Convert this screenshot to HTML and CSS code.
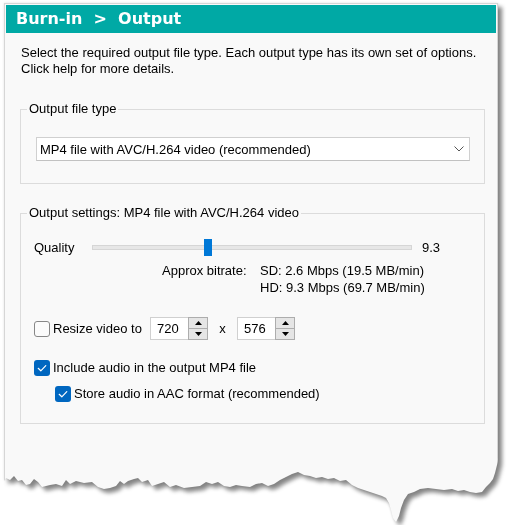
FILE: index.html
```html
<!DOCTYPE html>
<html lang="en">
<head>
<meta charset="utf-8">
<title>Burn-in &gt; Output</title>
<link rel="stylesheet" href="styles.css">
</head>
<body>
<div class="sheet">
  <div class="panel">
    <div class="title">Burn-in  &gt;  Output</div>
    <div class="content">
      <p class="intro">Select the required output file type. Each output type has its own set of options.<br>Click help for more details.</p>

      <fieldset class="group g1">
        <legend>Output file type</legend>
        <div class="group-body">
          <div class="combo">
            <span>MP4 file with AVC/H.264 video (recommended)</span>
            <svg class="chev" width="10" height="6" viewBox="0 0 10 6"><polyline points="0.5,0.5 5,5 9.5,0.5" fill="none" stroke="#555" stroke-width="1"/></svg>
          </div>
        </div>
      </fieldset>

      <fieldset class="group g2">
        <legend>Output settings: MP4 file with AVC/H.264 video</legend>
        <div class="settings">
          <div class="quality">
            <span class="q-label">Quality</span>
            <div class="track"><div class="thumb" style="left:111px"></div></div>
            <span class="q-value">9.3</span>
          </div>

          <div class="bitrate">
            <span>Approx bitrate:</span><span>SD: 2.6 Mbps (19.5 MB/min)</span>
            <span></span><span>HD: 9.3 Mbps (69.7 MB/min)</span>
          </div>

          <div class="resize">
            <span class="cb off"></span>
            <span class="resize-label">Resize video to</span>
            <div class="spin">
              <span class="spin-val">720</span>
              <div class="spin-btns">
                <span class="spin-btn"><svg width="7" height="4" viewBox="0 0 7 4"><polygon points="3.5,0 7,4 0,4" fill="#000"/></svg></span>
                <span class="spin-btn"><svg width="7" height="4" viewBox="0 0 7 4"><polygon points="0,0 7,0 3.5,4" fill="#000"/></svg></span>
              </div>
            </div>
            <span class="times">x</span>
            <div class="spin">
              <span class="spin-val">576</span>
              <div class="spin-btns">
                <span class="spin-btn"><svg width="7" height="4" viewBox="0 0 7 4"><polygon points="3.5,0 7,4 0,4" fill="#000"/></svg></span>
                <span class="spin-btn"><svg width="7" height="4" viewBox="0 0 7 4"><polygon points="0,0 7,0 3.5,4" fill="#000"/></svg></span>
              </div>
            </div>
          </div>

          <div class="check-row">
            <span class="cb on"><svg width="16" height="16" viewBox="0 0 16 16"><polyline points="4.2,8.3 6.8,10.8 11.8,5.6" fill="none" stroke="#fff" stroke-width="1.2" stroke-linecap="round" stroke-linejoin="round"/></svg></span>
            <span>Include audio in the output MP4 file</span>
          </div>
          <div class="check-row sub">
            <span class="cb on"><svg width="16" height="16" viewBox="0 0 16 16"><polyline points="4.2,8.3 6.8,10.8 11.8,5.6" fill="none" stroke="#fff" stroke-width="1.2" stroke-linecap="round" stroke-linejoin="round"/></svg></span>
            <span>Store audio in AAC format (recommended)</span>
          </div>
        </div>
      </fieldset>
    </div>
  </div>
</div>
</body>
</html>
```

FILE: styles.css
```css
html, body {
  margin: 0;
  background: #ffffff;
}

body {
  font-family: "Liberation Sans", Arial, sans-serif;
  font-size: 13px;
  color: #000;
}

.sheet {
  margin: 3px 0 0 4px;
  width: 494px;
  filter: drop-shadow(4px 4px 2px rgba(0, 0, 0, 0.45)) drop-shadow(0 0 1px rgba(0, 0, 0, 0.12));
}

.panel {
  box-sizing: border-box;
  min-height: 522px;
  border: 1px solid #d6d6d6;
  padding: 1px;
  background: #f9f9f9;
  clip-path: polygon(0 0, 494px 0, 494px 455px,
    493px 462px, 491px 470px, 489px 476px, 486px 480px, 482px 484px, 478px 489px,
    472px 490px, 466px 489px, 460px 487px, 454px 488px, 448px 486px, 440px 487px,
    432px 486px, 424px 485px, 416px 486px, 410px 489px, 404px 491px, 400px 497px,
    397px 505px, 395px 513px, 392px 519px, 389px 515px, 387px 507px, 385px 500px,
    382px 495px, 378px 493px, 372px 491px, 366px 489px, 360px 487px, 354px 485px,
    348px 482px, 342px 477px, 336px 478px, 330px 475px, 324px 476px, 318px 474px,
    312px 475px, 306px 473px, 300px 472px, 294px 469px, 288px 471px, 282px 474px,
    276px 477px, 270px 481px, 264px 483px, 258px 480px, 252px 481px, 246px 484px,
    238px 483px, 232px 482px, 226px 484px, 220px 483px, 214px 479px, 208px 481px,
    202px 479px, 196px 483px, 188px 484px, 180px 485px, 172px 482px, 166px 484px,
    160px 479px, 154px 481px, 148px 483px, 144px 477px, 138px 479px, 134px 475px,
    130px 476px, 124px 478px, 120px 481px, 116px 478px, 112px 483px, 106px 485px,
    100px 486px, 94px 484px, 88px 479px, 80px 480px, 72px 478px, 66px 481px,
    62px 477px, 58px 483px, 52px 481px, 46px 482px, 38px 484px, 34px 479px,
    30px 476px, 26px 481px, 22px 482px, 18px 477px, 14px 478px, 10px 473px,
    6px 477px, 2px 475px, 0 478px);
}

.title {
  height: 28px;
  padding-left: 10px;
  background: #00a9a5;
  color: #ffffff;
  font-family: "DejaVu Sans", Verdana, sans-serif;
  font-weight: bold;
  font-size: 16px;
  line-height: 28px;
  white-space: pre;
}

.content {
  padding: 0 11px 0 14px;
}

.intro {
  margin: 12px 0 0 1px;
  line-height: 16px;
}

.group {
  margin: 0;
  padding: 0;
  min-width: 0;
  border: 1px solid #dcdcdc;
}

.group legend {
  margin-left: 6px;
  padding: 0 2px;
  line-height: 16px;
}

.g1 {
  margin-top: 24px;
}

.g2 {
  margin-top: 21px;
}

.group-body {
  padding: 20px 14px 22px 15px;
}

.combo {
  display: flex;
  align-items: center;
  justify-content: space-between;
  box-sizing: border-box;
  height: 24px;
  padding: 0 5px 0 3px;
  border: 1px solid #d0d0d0;
  border-bottom-color: #c2c2c2;
  background: #ffffff;
}

.chev {
  display: block;
}

.settings {
  padding: 18px 0 21px 13px;
}

.quality {
  display: flex;
  align-items: center;
  height: 17px;
}

.q-label {
  flex: 0 0 58px;
}

.track {
  position: relative;
  flex: 0 0 320px;
  box-sizing: border-box;
  height: 5px;
  border: 1px solid #d6d6d6;
  background: #e7e7e7;
}

.thumb {
  position: absolute;
  top: 50%;
  width: 8px;
  height: 17px;
  margin-top: -8.5px;
  background: #0078d7;
}

.q-value {
  margin-left: 10px;
}

.bitrate {
  display: grid;
  grid-template-columns: 98px auto;
  margin: 6px 0 0 128px;
  line-height: 17px;
}

.resize {
  display: flex;
  align-items: center;
  height: 23px;
  margin-top: 21px;
}

.cb {
  display: block;
  flex: 0 0 16px;
  box-sizing: border-box;
  width: 16px;
  height: 16px;
  margin-right: 3px;
  border-radius: 3px;
}

.cb svg {
  display: block;
}

.cb.off {
  border: 1px solid #878787;
  background: #fbfbfb;
}

.cb.on {
  background: #0067c0;
}

.resize-label {
  flex: 0 0 97px;
}

.spin {
  display: flex;
  flex: 0 0 58px;
  box-sizing: border-box;
  height: 23px;
  border: 1px solid #d0d0d0;
  background: #ffffff;
}

.spin-val {
  flex: 1;
  padding-left: 6px;
  line-height: 21px;
}

.spin-btns {
  display: flex;
  flex-direction: column;
  width: 18px;
  margin: -1px -1px -1px 0;
  border: 1px solid #adadad;
}

.spin-btn {
  display: flex;
  flex: 1;
  align-items: center;
  justify-content: center;
  background: #e5e5e5;
}

.spin-btn + .spin-btn {
  border-top: 1px solid #adadad;
}

.spin-btn svg {
  display: block;
}

.times {
  flex: 0 0 29px;
  text-align: center;
}

.check-row {
  display: flex;
  align-items: center;
  height: 16px;
  margin-top: 20px;
  line-height: 16px;
}

.check-row.sub {
  margin-top: 10px;
  margin-left: 21px;
}
```
